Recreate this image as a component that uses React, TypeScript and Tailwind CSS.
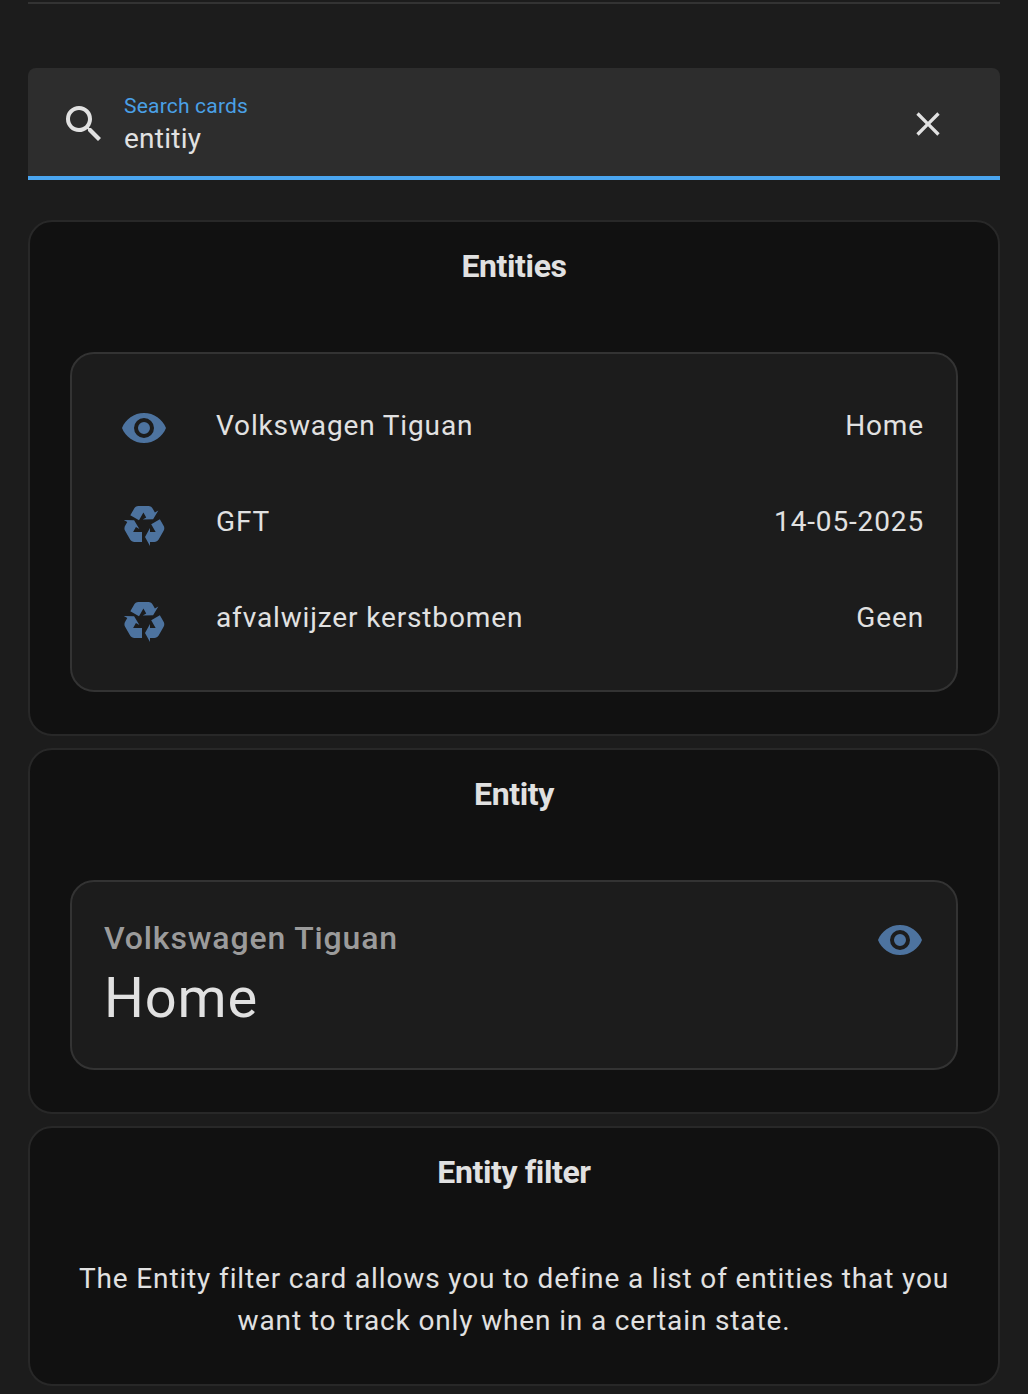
import type { ReactNode } from "react";

const EYE =
  "M12,9A3,3 0 0,0 9,12A3,3 0 0,0 12,15A3,3 0 0,0 15,12A3,3 0 0,0 12,9M12,17A5,5 0 0,1 7,12A5,5 0 0,1 12,7A5,5 0 0,1 17,12A5,5 0 0,1 12,17M12,4.5C7,4.5 2.73,7.61 1,12C2.73,16.39 7,19.5 12,19.5C17,19.5 21.27,16.39 23,12C21.27,7.61 17,4.5 12,4.5Z";
const RECYCLE =
  "M21.82,15.42L19.32,19.75C18.83,20.61 17.92,21.06 17,21H15V23L12.5,18.5L15,14V16H17.82L15.6,12.15L19.93,9.65L21.73,12.77C22.25,13.54 22.32,14.57 21.82,15.42M9.21,3.06H14.21C15.19,3.06 16.04,3.63 16.45,4.45L17.45,6.19L19.18,5.19L16.54,9.6L11.39,9.69L13.12,8.69L11.71,6.24L9.5,10.09L5.16,7.59L6.96,4.47C7.37,3.64 8.22,3.06 9.21,3.06M5.05,19.76L2.55,15.43C2.06,14.58 2.13,13.56 2.64,12.79L3.64,11.06L1.91,10.06L7.05,10.14L9.7,14.56L7.97,13.56L6.56,16H11V21H7.4C6.47,21.07 5.55,20.61 5.05,19.76Z";
const MAGNIFY =
  "M9.5,3A6.5,6.5 0 0,1 16,9.5C16,11.11 15.41,12.59 14.44,13.73L14.71,14H15.5L20.5,19L19,20.5L14,15.5V14.71L13.73,14.44C12.59,15.41 11.11,16 9.5,16A6.5,6.5 0 0,1 3,9.5A6.5,6.5 0 0,1 9.5,3M9.5,5C7,5 5,7 5,9.5C5,12 7,14 9.5,14C12,14 14,12 14,9.5C14,7 12,5 9.5,5Z";
const CLOSE =
  "M19,6.41L17.59,5L12,10.59L6.41,5L5,6.41L10.59,12L5,17.59L6.41,19L12,13.41L17.59,19L19,17.59L13.41,12L19,6.41Z";

function Icon({ path, className }: { path: string; className: string }) {
  return (
    <svg viewBox="0 0 24 24" fill="currentColor" className={className}>
      <path d={path} />
    </svg>
  );
}

function Card({ title, className, children }: { title: string; className: string; children: ReactNode }) {
  return (
    <section className={`flex flex-col rounded-[24px] border-2 border-[#282828] bg-[#111111] ${className}`}>
      <h2 className="mt-5 text-center text-[32px] leading-[48px] font-bold tracking-[-0.384px]">{title}</h2>
      {children}
    </section>
  );
}

const rows = [
  { icon: EYE, name: "Volkswagen Tiguan", state: "Home" },
  { icon: RECYCLE, name: "GFT", state: "14-05-2025" },
  { icon: RECYCLE, name: "afvalwijzer kerstbomen", state: "Geen" },
];

export default function App() {
  return (
    <main className="h-[1394px] overflow-hidden bg-[#1c1c1c] px-7 pt-[2px] font-[Roboto,sans-serif] text-[#e1e1e1]">
      <div className="h-[2px] bg-[#333333]" />

      <div className="mt-16 flex h-28 items-start rounded-t-[8px] border-b-4 border-[#4aa5f0] bg-[#2d2d2d] pr-[52px] pl-8">
        <Icon path={MAGNIFY} className="mt-8 size-12" />
        <div className="ml-4 flex-1 pt-[26px]">
          <div className="text-[21px] leading-6 tracking-[0.2px] text-[#4aa0e6]">Search cards</div>
          <div className="mt-[5px] text-[28px] leading-8 tracking-[0.25px]">entitiy</div>
        </div>
        <Icon path={CLOSE} className="mt-9 size-10" />
      </div>

      <div className="mt-10 flex flex-col gap-3">
        <Card title="Entities" className="h-[516px]">
          <div className="mx-10 mt-[62px] flex h-[340px] flex-col rounded-[24px] border-2 border-[#333333] bg-[#1c1c1c] pt-[26px] pr-8 pl-12">
            {rows.map((r) => (
              <div key={r.name} className="flex h-24 items-center text-[28px] leading-10 tracking-[0.86px]">
                <Icon path={r.icon} className="size-12 text-[#4d739f]" />
                <span className="-mt-1 ml-12 flex-1">{r.name}</span>
                <span className="-mt-1">{r.state}</span>
              </div>
            ))}
          </div>
        </Card>

        <Card title="Entity" className="h-[366px]">
          <div className="mx-10 mt-[62px] flex h-[190px] items-start justify-between rounded-[24px] border-2 border-[#333333] bg-[#1c1c1c] px-8">
            <div className="pt-9">
              <div className="text-[32px] leading-10 font-medium tracking-[0.86px] text-[#9b9b9b]">Volkswagen Tiguan</div>
              <div className="mt-2 text-[56px] leading-[64px] tracking-[0.86px]">Home</div>
            </div>
            <Icon path={EYE} className="mt-[34px] size-12 text-[#4d739f]" />
          </div>
        </Card>

        <Card title="Entity filter" className="h-[260px]">
          <p className="mt-[62px] px-10 text-center text-[28px] leading-[42px] tracking-[0.86px]">
            The Entity filter card allows you to define a list of entities that you
            <br />
            want to track only when in a certain state.
          </p>
        </Card>
      </div>
    </main>
  );
}
